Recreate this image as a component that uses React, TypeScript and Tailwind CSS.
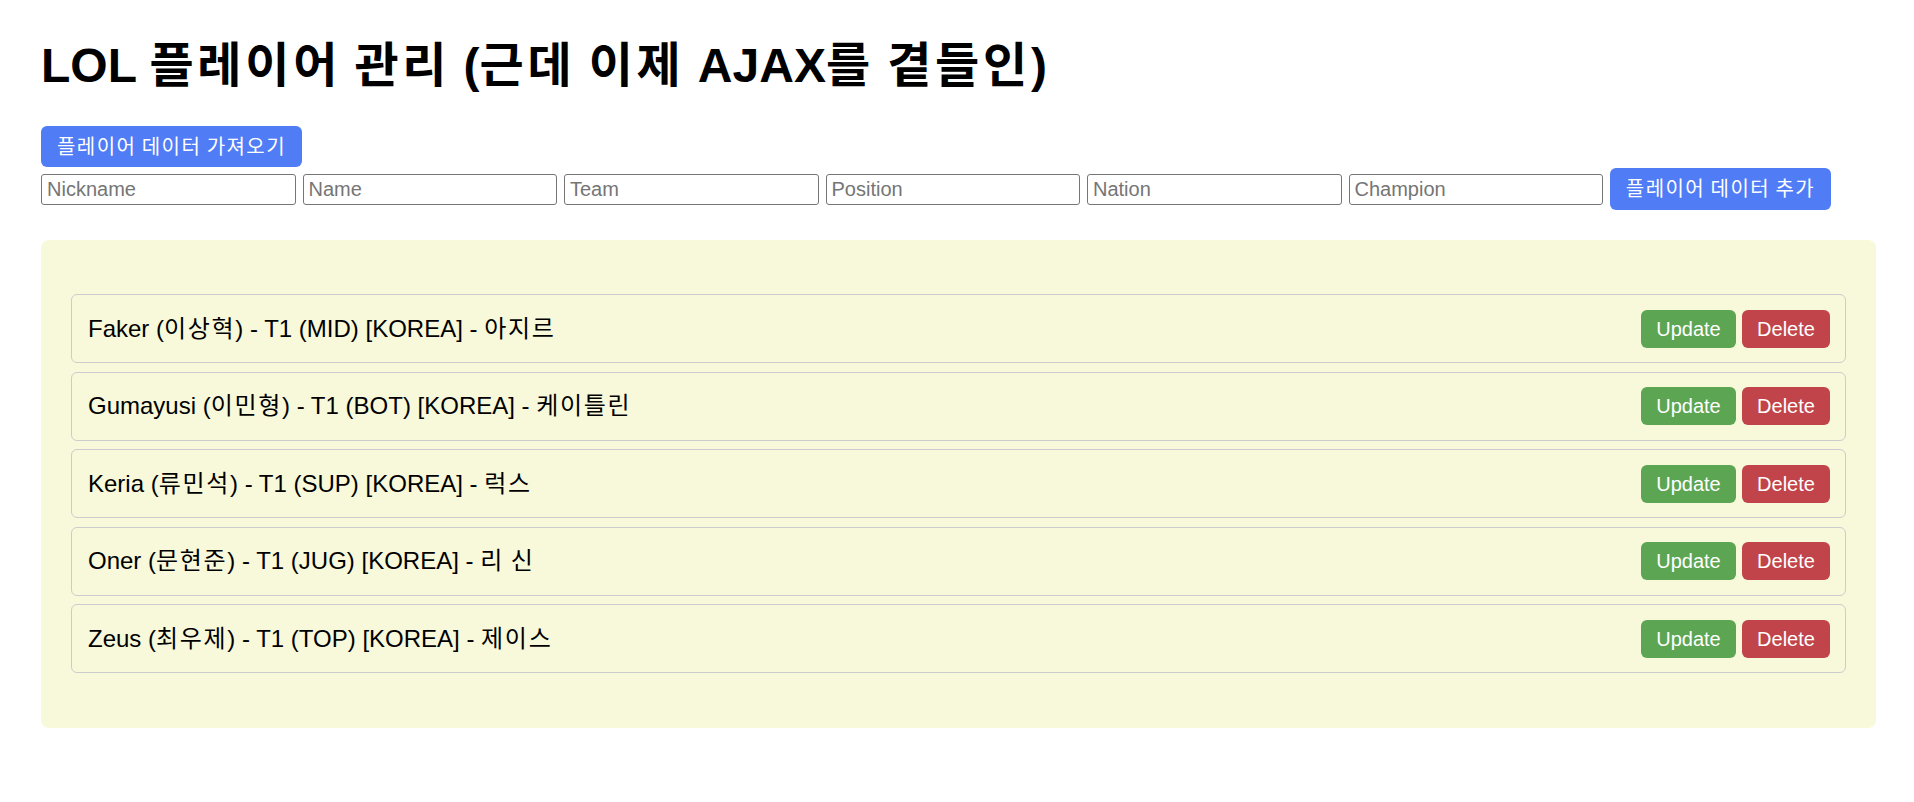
import { useState } from 'react'

interface Player {
  id: number
  nickname: string
  name: string
  team: string
  position: string
  nation: string
  champion: string
}

const initialPlayers: Player[] = [
  { id: 1, nickname: 'Faker', name: '이상혁', team: 'T1', position: 'MID', nation: 'KOREA', champion: '아지르' },
  { id: 2, nickname: 'Gumayusi', name: '이민형', team: 'T1', position: 'BOT', nation: 'KOREA', champion: '케이틀린' },
  { id: 3, nickname: 'Keria', name: '류민석', team: 'T1', position: 'SUP', nation: 'KOREA', champion: '럭스' },
  { id: 4, nickname: 'Oner', name: '문현준', team: 'T1', position: 'JUG', nation: 'KOREA', champion: '리 신' },
  { id: 5, nickname: 'Zeus', name: '최우제', team: 'T1', position: 'TOP', nation: 'KOREA', champion: '제이스' },
]

const fields = ['Nickname', 'Name', 'Team', 'Position', 'Nation', 'Champion']

// hangul runs get a bit of extra spacing, the fallback CJK font is narrower than the original
function Ko({ text, wide }: { text: string; wide?: boolean }) {
  const parts = text.split(/([\uac00-\ud7a3]+)/)
  return (
    <span>
      {parts.map((part, i) =>
        /[\uac00-\ud7a3]/.test(part) ? (
          <span key={i} className={wide ? 'tracking-[0.078em]' : 'tracking-[0.07em]'}>
            {part}
          </span>
        ) : (
          part
        )
      )}
    </span>
  )
}

export default function App() {
  const [players] = useState(initialPlayers)

  return (
    <div className="min-h-screen bg-white pl-[41px] pr-[38px] pt-[38px] pb-[40px] font-['Liberation_Sans','Noto_Sans_CJK_KR',sans-serif] text-black">
      <h1 className="text-[48px] font-bold leading-[56px]">
        <Ko text="LOL 플레이어 관리 (근데 이제 AJAX를 곁들인)" wide />
      </h1>

      <button className="mt-[32px] flex h-[41px] w-[261px] items-center justify-center rounded-[6px] bg-[#507cf5] text-[20px] text-white">
        <Ko text="플레이어 데이터 가져오기" />
      </button>

      <div className="mt-[1px] flex items-center gap-[7px]">
        {fields.map((f) => (
          <input
            key={f}
            placeholder={f}
            className="h-[31px] w-[254.5px] rounded-[3px] border border-[#767676] bg-white pl-[5px] text-[20px] placeholder:text-[#757575]"
          />
        ))}
        <button className="flex h-[42px] w-[221px] items-center justify-center rounded-[6px] bg-[#507cf5] text-[20px] text-white">
          <Ko text="플레이어 데이터 추가" />
        </button>
      </div>

      <div className="mt-[30px] rounded-[8px] bg-[#f8f8da] px-[30px] pt-[54px] pb-[55px]">
        <ul className="flex flex-col gap-[8.5px]">
          {players.map((p) => (
            <li
              key={p.id}
              className="flex h-[69px] items-center justify-between rounded-[6px] border border-[#cccccc] pl-[16px] pr-[15px]"
            >
              <span className="text-[24px]">
                <Ko text={`${p.nickname} (${p.name}) - ${p.team} (${p.position}) [${p.nation}] - ${p.champion}`} />
              </span>
              <div className="flex gap-[6px]">
                <button className="flex h-[38px] w-[95px] items-center justify-center rounded-[6px] bg-[#5ca553] text-[20px] text-white">
                  Update
                </button>
                <button className="flex h-[38px] w-[88px] items-center justify-center rounded-[6px] bg-[#c1444b] text-[20px] text-white">
                  Delete
                </button>
              </div>
            </li>
          ))}
        </ul>
      </div>
    </div>
  )
}
